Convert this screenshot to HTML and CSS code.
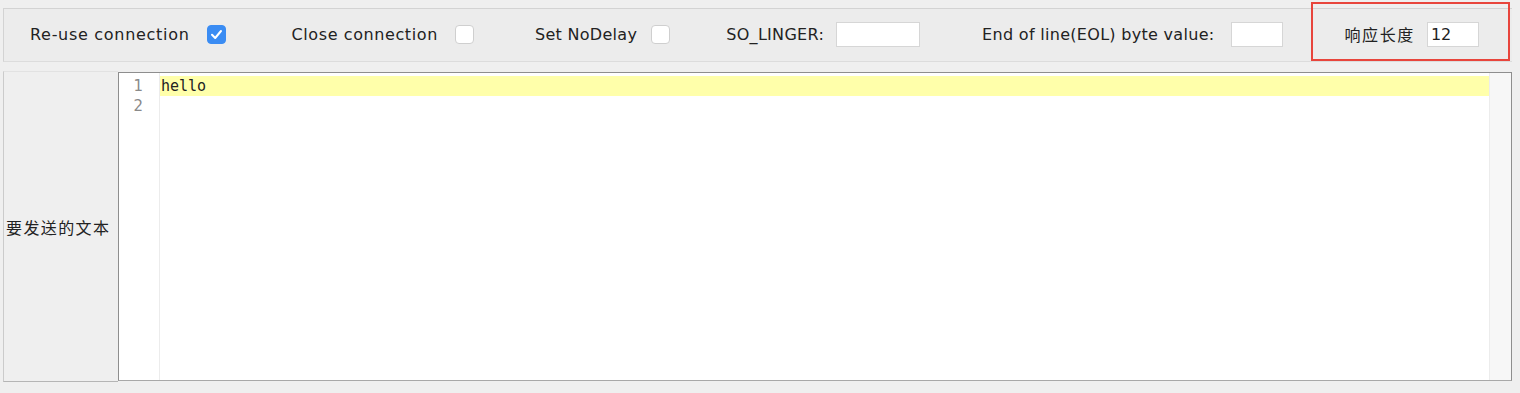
FILE: index.html
```html
<!DOCTYPE html>
<html lang="zh">
<head>
<meta charset="utf-8">
<title>TCP Sampler</title>
<link rel="stylesheet" href="styles.css">
</head>
<body>
<div class="toolbar">
  <div class="group g1">
    <span class="label">Re-use connection</span>
    <span class="check checked"><svg viewBox="0 0 19 19" width="19" height="19"><path d="M5 9.8 L8.2 13 L14 6" fill="none" stroke="#fff" stroke-width="2" stroke-linecap="round" stroke-linejoin="round"/></svg></span>
  </div>
  <div class="group g2">
    <span class="label">Close connection</span>
    <span class="check"></span>
  </div>
  <div class="group g3">
    <span class="label">Set NoDelay</span>
    <span class="check"></span>
  </div>
  <div class="group g4">
    <span class="label">SO_LINGER:</span>
    <span class="field wide"></span>
  </div>
  <div class="group g5">
    <span class="label">End of line(EOL) byte value:</span>
    <span class="field"></span>
  </div>
  <div class="group g6">
    <span class="label cjk">响应长度</span>
    <span class="field">12</span>
  </div>
  <div class="highlight-box"></div>
</div>
<div class="main">
  <div class="side-label"><span class="cjk">要发送的文本</span></div>
  <div class="editor">
    <div class="gutter">
      <div class="ln">1</div>
      <div class="ln">2</div>
    </div>
    <div class="lines">
      <div class="line current">hello</div>
      <div class="line"></div>
    </div>
    <div class="vtrack"></div>
  </div>
</div>
</body>
</html>
```

FILE: styles.css
```css
html, body {
  margin: 0;
  padding: 0;
  background: #efefef;
}
body {
  width: 1520px;
  height: 393px;
  overflow: hidden;
  font-family: "DejaVu Sans", "Noto Sans CJK SC", sans-serif;
  color: #222;
}
.toolbar {
  position: relative;
  margin: 8px 8px 0 3px;
  height: 50px;
  background: #ececec;
  border-top: 1px solid #d3d3d3;
  border-left: 1px solid #d3d3d3;
  border-bottom: 1px solid #dcdcdc;
  display: flex;
  align-items: center;
  padding-left: 26px;
  padding-bottom: 2px;
  box-sizing: content-box;
}
.group {
  display: flex;
  align-items: center;
  flex: none;
}
.label {
  font-size: 16px;
  letter-spacing: 0.7px;
  white-space: nowrap;
}
.cjk {
  font-family: "Noto Sans CJK SC", sans-serif;
}
.g1 .label { margin-right: 18px; }
.g2 .label { margin-right: 17px; letter-spacing: 0.6px; }
.g3 .label { margin-right: 14px; letter-spacing: 0.3px; }
.g4 .label { margin-right: 12px; letter-spacing: 0.3px; }
.g5 .label { margin-right: 16px; letter-spacing: 0.3px; }
.g6 .label { margin-right: 12px; letter-spacing: 1.6px; }
.g2 { margin-left: 65px; }
.g3 { margin-left: 61px; }
.g4 { margin-left: 56px; }
.g5 { margin-left: 62px; }
.g6 { margin-left: 62px; }
.check {
  width: 19px;
  height: 19px;
  box-sizing: border-box;
  border: 1px solid #cfcfcf;
  border-radius: 4px;
  background: #fff;
  display: flex;
  align-items: center;
  justify-content: center;
}
.check.checked {
  background: #3a8cf3;
  border-color: #3a8cf3;
}
.check svg {
  display: block;
  margin: -1px;
}
.field {
  width: 52px;
  height: 25px;
  box-sizing: border-box;
  background: #fff;
  border: 1px solid #d6d6d6;
  font-size: 16px;
  line-height: 23px;
  padding-left: 3px;
}
.field.wide { width: 84px; }
.highlight-box {
  position: absolute;
  left: 1307px;
  top: -7px;
  width: 199px;
  height: 59px;
  box-sizing: border-box;
  border: 2px solid #e8453c;
}
.main {
  display: flex;
  margin: 9px 8px 0 3px;
  height: 311px;
}
.side-label {
  width: 115px;
  box-sizing: border-box;
  background: #efefef;
  border-left: 1px solid #cbcbcb;
  border-top: 1px solid #e2e2e2;
  border-bottom: 1px solid #b5b5b5;
  display: flex;
  align-items: center;
  padding-left: 2px;
  font-size: 16px;
  letter-spacing: 1.4px;
  color: #222;
}
.editor {
  flex: 1;
  display: flex;
  margin-top: 1px;
  height: 309px;
  box-sizing: border-box;
  background: #fff;
  border: 1px solid #8e8e8e;
  border-bottom-color: #a8a8a8;
}
.gutter {
  width: 41px;
  flex: none;
  box-sizing: border-box;
  border-right: 1px solid #ececec;
  padding-top: 3px;
  padding-right: 16px;
  text-align: right;
  font-family: "DejaVu Sans", sans-serif;
  font-size: 15px;
  color: #8a8a8a;
}
.ln {
  height: 20px;
  line-height: 20px;
}
.lines {
  flex: 1;
  padding-top: 3px;
  font-family: "DejaVu Sans Mono", monospace;
  font-size: 15px;
  color: #222;
}
.line {
  height: 20px;
  line-height: 20px;
  padding-left: 1px;
}
.line.current {
  background: #ffffaa;
}
.vtrack {
  width: 21px;
  flex: none;
  background: #f7f7f7;
  border-left: 1px solid #ececec;
}
```
